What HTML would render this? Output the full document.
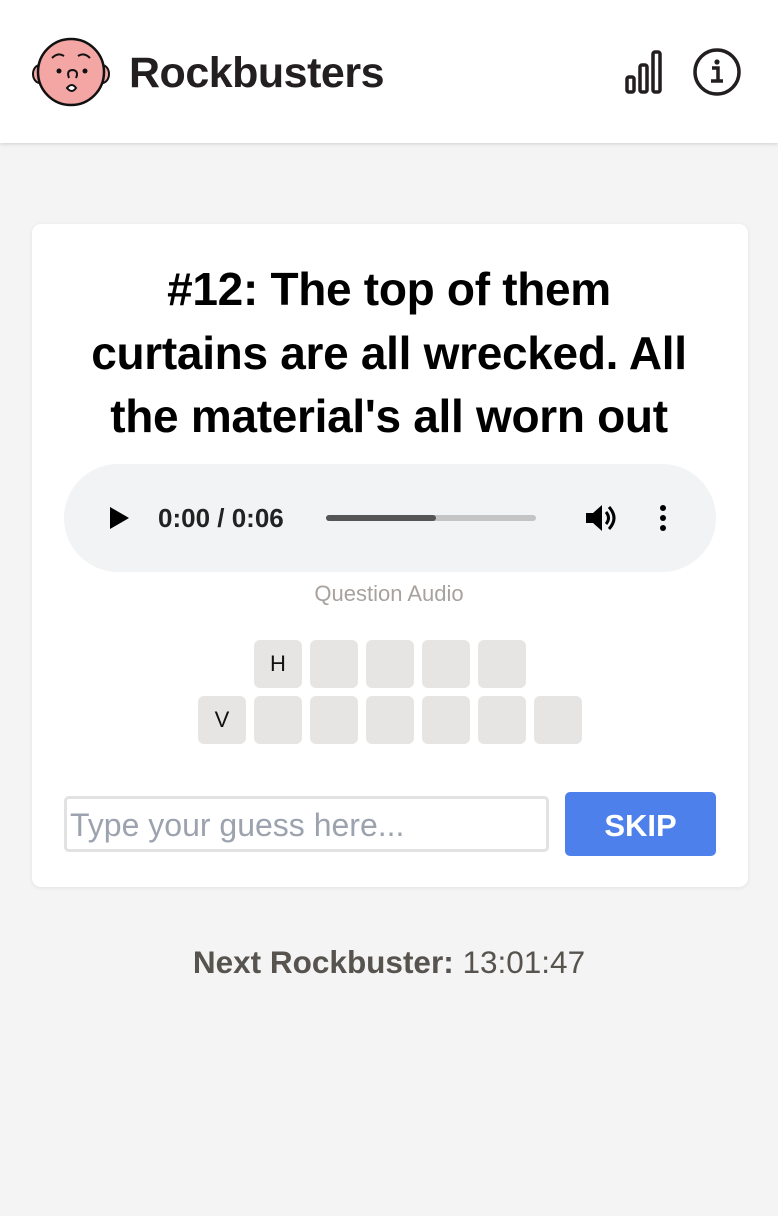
<!DOCTYPE html>
<html><head><meta charset="utf-8"><style>
*{box-sizing:border-box;margin:0;padding:0}
body{width:778px;height:1216px;background:#f4f4f4;font-family:"Liberation Sans",sans-serif;position:relative;overflow:hidden}
.hdr{position:absolute;left:0;top:0;width:778px;height:143px;background:#fff;box-shadow:0 1px 4px rgba(0,0,0,.15)}
.brand{position:absolute;left:129px;top:49px;font-size:43px;font-weight:bold;color:#231f20;letter-spacing:-0.5px}
.card{position:absolute;left:32px;top:224px;width:716px;height:663px;background:#fff;border-radius:9px;box-shadow:0 1px 4px rgba(0,0,0,.08)}
h1{position:absolute;left:0;top:258px;width:778px;text-align:center;font-size:46px;line-height:63.5px;font-weight:bold;color:#000;letter-spacing:-0.3px}
.audio{position:absolute;left:64px;top:464px;width:652px;height:108px;background:#f1f3f4;border-radius:54px}
.lbl{position:absolute;left:0;top:581px;width:778px;text-align:center;font-size:22px;color:#a8a29e}
.t{position:absolute;width:48px;height:48px;background:#e7e5e4;border-radius:6px;font-size:22px;text-align:center;line-height:48px;color:#111}
.inp{position:absolute;left:64px;top:796px;width:485px;height:56px;border:3px solid #e2e2e2;border-radius:5px;font-size:32px;color:#9ca3af;padding:8px 0 0 3px;white-space:nowrap}
.btn{position:absolute;left:565px;top:792px;width:151px;height:64px;background:#4e80ec;border-radius:5px;color:#fff;font-weight:bold;font-size:31px;text-align:center;line-height:68px}
.next{position:absolute;left:0;top:944px;width:778px;text-align:center;font-size:31.5px;color:#57534e}
</style></head><body>
<div class="hdr">
<svg style="position:absolute;left:30px;top:36px" width="84" height="72" viewBox="0 0 84 72">
<ellipse cx="10" cy="38" rx="7" ry="9" fill="#f4a6a4" stroke="#111" stroke-width="2"/>
<ellipse cx="72" cy="38" rx="7" ry="9" fill="#f4a6a4" stroke="#111" stroke-width="2"/>
<circle cx="41" cy="36" r="33" fill="#f4a6a4" stroke="#111" stroke-width="2.5"/>
<path d="M22 22 q6 -6 12 -2 M48 20 q6 -4 12 2" stroke="#111" stroke-width="2" fill="none"/>
<circle cx="29" cy="35" r="2.5" fill="#111"/><circle cx="55" cy="35" r="2.5" fill="#111"/>
<path d="M39 42 q-3 -8 4 -8 q6 1 3 8" stroke="#111" stroke-width="2" fill="none"/>
<path d="M37 52 q5 -6 9 0 q-4 6 -9 0z" fill="#fff" stroke="#111" stroke-width="2"/>
</svg>
<div class="brand">Rockbusters</div>
<svg style="position:absolute;left:622px;top:48px" width="50" height="48" viewBox="0 0 50 48">
<g fill="none" stroke="#231f20" stroke-width="3.5"><rect x="5" y="29" width="7" height="15" rx="2"/><rect x="18" y="17" width="7" height="27" rx="2"/><rect x="31" y="4" width="7" height="40" rx="2"/></g>
</svg>
<svg style="position:absolute;left:692px;top:47px" width="50" height="50" viewBox="0 0 50 50">
<circle cx="25" cy="25" r="22" fill="none" stroke="#231f20" stroke-width="3.5"/>
<circle cx="25" cy="15" r="2.6" fill="#231f20"/>
<path d="M20 21 h6 v13 M19 34 h12" fill="none" stroke="#231f20" stroke-width="3.5"/>
</svg>
</div>
<div class="card"></div>
<h1>#12: The top of them<br>curtains are all wrecked. All<br>the material's all worn out</h1>
<div class="audio">
<svg style="position:absolute;left:44px;top:42px" width="22" height="24"><path d="M2 1 L21 12 L2 23z" fill="#000"/></svg>
<div style="position:absolute;left:94px;top:39px;font-size:26px;font-weight:bold;color:#222">0:00 / 0:06</div>
<div style="position:absolute;left:262px;top:51px;width:210px;height:6px;background:#c4c4c4;border-radius:3px"><div style="width:110px;height:6px;background:#555;border-radius:3px"></div></div>
<svg style="position:absolute;left:520px;top:38px" width="34" height="32" viewBox="0 0 34 32"><path d="M2 11 h7 l9 -8 v26 l-9 -8 h-7z" fill="#000"/><path d="M22 10 q5 6 0 12 M25 5 q10 11 0 22" stroke="#000" stroke-width="3" fill="none"/></svg>
<svg style="position:absolute;left:594px;top:40px" width="10" height="30"><circle cx="5" cy="4" r="3" fill="#000"/><circle cx="5" cy="14" r="3" fill="#000"/><circle cx="5" cy="24" r="3" fill="#000"/></svg>
</div>
<div class="lbl">Question Audio</div>
<div class="t" style="left:254px;top:640px">H</div>
<div class="t" style="left:310px;top:640px"></div>
<div class="t" style="left:366px;top:640px"></div>
<div class="t" style="left:422px;top:640px"></div>
<div class="t" style="left:478px;top:640px"></div>
<div class="t" style="left:198px;top:696px">V</div>
<div class="t" style="left:254px;top:696px"></div>
<div class="t" style="left:310px;top:696px"></div>
<div class="t" style="left:366px;top:696px"></div>
<div class="t" style="left:422px;top:696px"></div>
<div class="t" style="left:478px;top:696px"></div>
<div class="t" style="left:534px;top:696px"></div>
<div class="inp">Type your guess here...</div>
<div class="btn">SKIP</div>
<div class="next"><b>Next Rockbuster:</b> 13:01:47</div>
</body></html>
